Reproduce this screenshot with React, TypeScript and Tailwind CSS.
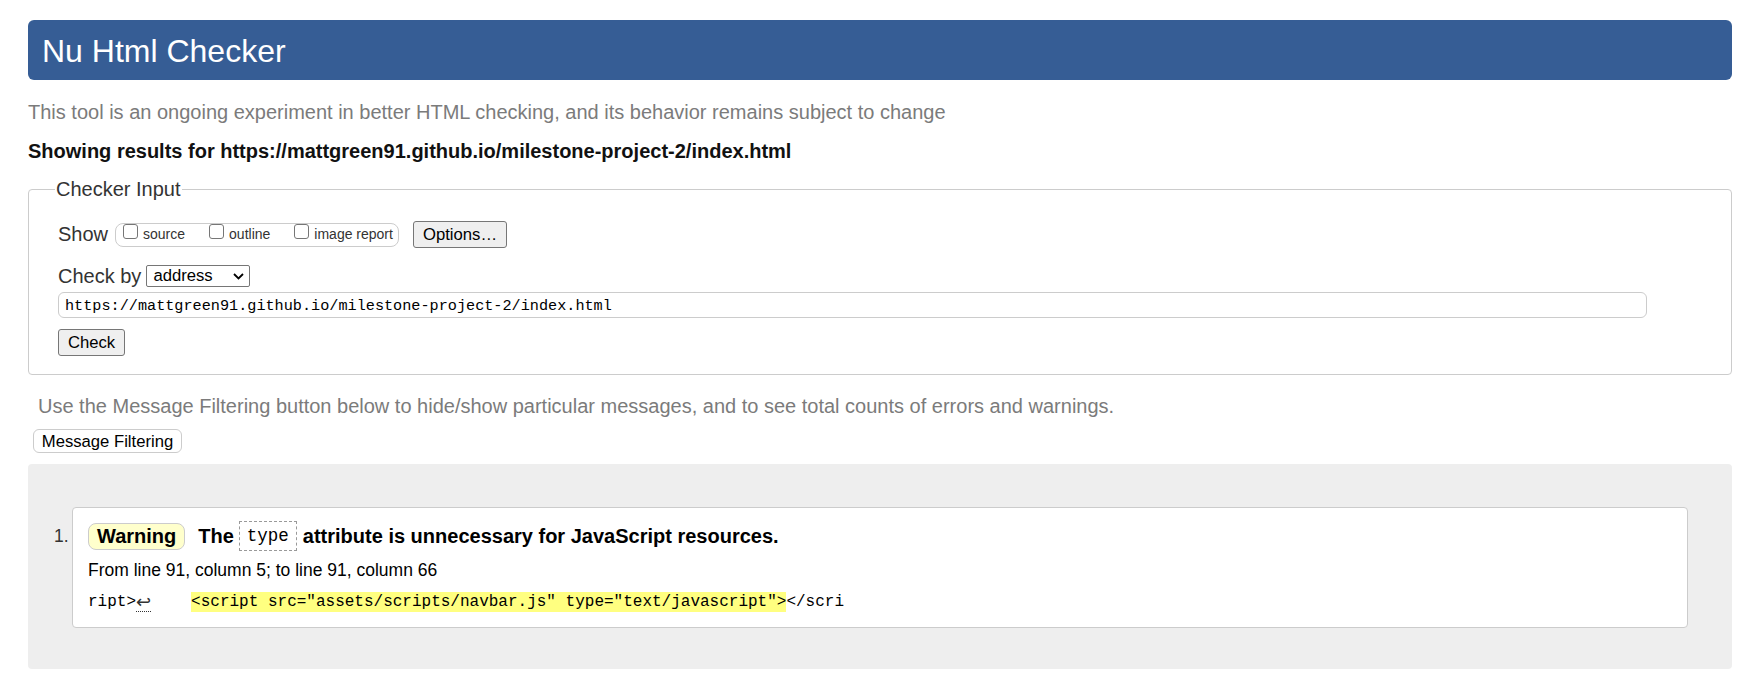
import React from "react";

function Box() {
  return <span className="inline-block w-[15px] h-[15px] border border-[#767676] rounded-[3px] bg-white shrink-0 mb-[6px]" />;
}

export default function App() {
  return (
    <div className="min-h-[690px] bg-white font-['Liberation_Sans',Arial,sans-serif] pl-[28px] pr-[9px] pt-[20px] text-[#222]">
      <header className="h-[60px] bg-[#365d95] rounded-[6px] pl-[14px] flex items-center">
        <h1 className="text-[32px] leading-[32px] text-white font-normal mt-[2px]">Nu Html Checker</h1>
      </header>

      <p className="mt-[21px] text-[20px] leading-[23px] text-[#7b7b7b]">
        This tool is an ongoing experiment in better HTML checking, and its behavior remains subject to change
      </p>
      <p className="mt-[16px] text-[20px] leading-[23px] font-bold text-[#111]">
        Showing results for https://mattgreen91.github.io/milestone-project-2/index.html
      </p>

      <fieldset className="mt-[15px] border border-[#cccccc] rounded-[4px] px-[29px] pt-[20px] pb-[18px]">
        <legend className="ml-[-3px] px-[1px] text-[20px] leading-[23px] text-[#333]">Checker Input</legend>
        <div className="flex items-center h-[27px]">
          <span className="text-[20px] leading-[23px] text-[#333]">Show</span>
          <div className="ml-[7px] h-[24px] w-[284px] border border-[#cccccc] rounded-[8px] flex items-center pl-[7px] text-[14px] text-[#333]">
            <Box />
            <span className="ml-[5px]">source</span>
            <span className="ml-[24px] flex items-center"><Box /></span>
            <span className="ml-[5px]">outline</span>
            <span className="ml-[24px] flex items-center"><Box /></span>
            <span className="ml-[5px]">image report</span>
          </div>
          <button className="ml-[14px] h-[27px] w-[94px] bg-[#efefef] border border-[#767676] rounded-[3px] text-[16.67px] text-black flex items-center justify-center">
            Options…
          </button>
        </div>
        <div className="flex items-center h-[24px] mt-[16px]">
          <span className="text-[20px] leading-[23px] text-[#333]">Check by</span>
          <div className="ml-[5px] h-[22px] w-[104px] border border-[#767676] rounded-[2px] bg-white flex items-center pl-[6px] pr-[5px] justify-between">
            <span className="text-[16.67px] text-black leading-[20px]">address</span>
            <svg width="11" height="7" viewBox="0 0 11 7">
              <path d="M1 1 L5.5 5.5 L10 1" fill="none" stroke="#000" strokeWidth="1.8" />
            </svg>
          </div>
        </div>
        <div className="mt-[4px] h-[26px] w-[1589px] border border-[#cccccc] rounded-[6px] flex items-center pl-[6px] pt-[2px] font-['Liberation_Mono',monospace] text-[15.2px] text-black">
          https://mattgreen91.github.io/milestone-project-2/index.html
        </div>
        <button className="mt-[11px] h-[27px] w-[67px] bg-[#efefef] border border-[#767676] rounded-[3px] text-[16.67px] text-black flex items-center justify-center">
          Check
        </button>
      </fieldset>

      <p className="mt-[20px] pl-[10px] text-[20px] leading-[23px] text-[#7b7b7b]">
        Use the Message Filtering button below to hide/show particular messages, and to see total counts of errors and warnings.
      </p>
      <button className="mt-[11px] ml-[5px] h-[24px] w-[149px] bg-white border border-[#cccccc] rounded-[6px] text-[16.67px] text-black flex items-center justify-center">
        Message Filtering
      </button>

      <div className="mt-[11px] bg-[#eeeeee] rounded-[4px] pl-[26px] pr-[44px] pt-[43px] pb-[41px] flex">
        <div className="w-[18px] text-[17.5px] text-[#333] pt-[19px] leading-[20px]">1.</div>
        <div className="flex-1 bg-white border border-[#cccccc] rounded-[4px] pl-[15px] pt-[13px] pb-[15px]">
          <div className="flex items-center h-[30px]">
            <span className="h-[27px] px-[8px] bg-[#ffffcc] border border-[#cccccc] rounded-[8px] flex items-center text-[20px] font-bold text-black">
              Warning
            </span>
            <span className="ml-[13px] text-[20px] font-bold text-black">The</span>
            <span className="ml-[5px] h-[30px] px-[7px] border border-dashed border-[#999] flex items-center font-['Liberation_Mono',monospace] text-[17.5px] text-black">
              type
            </span>
            <span className="ml-[6px] text-[20px] font-bold text-black">attribute is unnecessary for JavaScript resources.</span>
          </div>
          <p className="mt-[9px] text-[17.5px] leading-[20px] text-black">From line 91, column 5; to line 91, column 66</p>
          <div className="mt-[12px] flex items-center h-[20px] font-['Liberation_Mono',monospace] text-[16px] text-black">
            <span>ript&gt;</span>
            <span className="border-b border-dotted border-[#333] leading-[18px] text-[18px] text-[#333] font-['DejaVu_Sans',sans-serif]">↩</span>
            <span className="ml-[40px] bg-[#ffff80] h-[20px] leading-[20px]">&lt;script src="assets/scripts/navbar.js" type="text/javascript"&gt;</span>
            <span>&lt;/scri</span>
          </div>
        </div>
      </div>
    </div>
  );
}
